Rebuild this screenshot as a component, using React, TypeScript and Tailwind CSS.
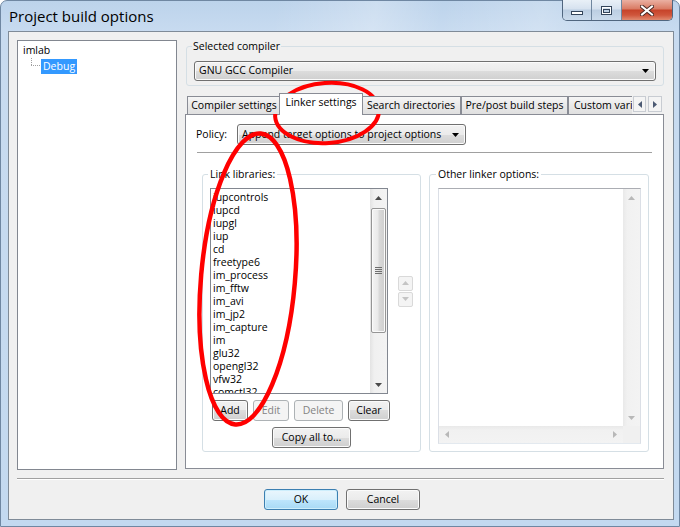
import React from "react";

type Dir = "up" | "down" | "left" | "right";
function Tri({ dir, color }: { dir: Dir; color: string }) {
  const v = dir === "up" || dir === "down";
  const pts = { up: "0,4 7,4 3.5,0", down: "0,0 7,0 3.5,4", left: "4,0 4,7 0,3.5", right: "0,0 0,7 4,3.5" }[dir];
  return (
    <svg width={v ? 7 : 4} height={v ? 4 : 7} className="block">
      <polygon points={pts} fill={color} />
    </svg>
  );
}

const BTN =
  "h-[21px] rounded-[3px] border border-[#707070] bg-[linear-gradient(to_bottom,#f2f2f2_0%,#ebebeb_50%,#dddddd_50%,#cfcfcf_100%)] shadow-[inset_0_0_0_1px_#fbfbfb] flex items-center justify-center text-black";
const BTN_DIS =
  "h-[21px] rounded-[3px] border border-[#adb2b5] bg-[#f4f4f4] flex items-center justify-center text-[#838383]";
const TAB =
  "h-[18px] mb-[1px] shrink-0 border border-b-0 border-[#898c95] bg-[linear-gradient(to_bottom,#f6f6f6,#e9e9e9_50%,#e0e0e0)] flex items-center justify-center whitespace-nowrap";

function Combo({ text, cls }: { text: string; cls: string }) {
  return (
    <div className={`${BTN} justify-between! pl-[4px] pr-[6px] ${cls}`}>
      <span className="whitespace-nowrap">{text}</span>
      <Tri dir="down" color="#000" />
    </div>
  );
}

const libs = [
  "iupcontrols",
  "iupcd",
  "iupgl",
  "iup",
  "cd",
  "freetype6",
  "im_process",
  "im_fftw",
  "im_avi",
  "im_jp2",
  "im_capture",
  "im",
  "glu32",
  "opengl32",
  "vfw32",
  "comctl32",
];

function ListScroll() {
  return (
    <div className="w-[17px] h-full flex flex-col bg-[linear-gradient(to_right,#e3e3e3,#f0f0f0_25%,#f3f3f3)]">
      <div className="h-[17px] flex items-center justify-center">
        <Tri dir="up" color="#4a4a4a" />
      </div>
      <div className="h-[2px]" />
      <div className="h-[125px] mx-[1px] rounded-[2px] border border-[#959595] bg-[linear-gradient(to_right,#f4f4f4,#e9e9e9_45%,#d9d9d9_55%,#cecece)] shadow-[inset_0_0_0_1px_#fafafa] flex flex-col items-center justify-center gap-[1px]">
        <div className="w-[7px] h-px bg-[#6e6e6e]" />
        <div className="w-[7px] h-px bg-[#6e6e6e]" />
        <div className="w-[7px] h-px bg-[#6e6e6e]" />
        <div className="w-[7px] h-px bg-[#6e6e6e]" />
      </div>
      <div className="flex-1" />
      <div className="h-[17px] flex items-center justify-center">
        <Tri dir="down" color="#4a4a4a" />
      </div>
    </div>
  );
}

export default function App() {
  return (
    <div className="relative w-[680px] h-[527px] overflow-hidden font-['Open_Sans',sans-serif] text-[10.5px] text-black">
      <div className="flex flex-col w-full h-full rounded-t-[7px] border border-[#6f87a2] bg-[linear-gradient(to_bottom,#bcd3eb_0px,#c8dbf0_31px,#c3d9f0_100%)] pl-[7px] pr-[5px] pb-[6px]">
        {/* title bar */}
        <div className="h-[30px] flex justify-between items-start shrink-0 bg-[linear-gradient(100deg,transparent_40%,rgba(255,255,255,0.25)_55%,transparent_65%,rgba(255,255,255,0.2)_80%,transparent_90%)]">
          <div className="ml-[1px] pt-[5px] text-[15px] leading-[20px] text-black">Project build options</div>
          <div className="-mt-[1px] mr-[1px] flex h-[21px] rounded-b-[5px] border border-t-0 border-[#50667f] overflow-hidden">
            <div className="w-[29px] h-full border-r border-[#6f869f] bg-[linear-gradient(to_bottom,#e9f0f7,#d6e2ef_45%,#bccee2_50%,#cbdbec)] flex items-end justify-center pb-[5px]">
              <svg width="12" height="4" className="block">
                <rect x="0.5" y="0.5" width="11" height="3" fill="#fff" stroke="#34455a" />
              </svg>
            </div>
            <div className="w-[30px] h-full border-r border-[#6f869f] bg-[linear-gradient(to_bottom,#e9f0f7,#d6e2ef_45%,#bccee2_50%,#cbdbec)] flex items-center justify-center pt-[1px]">
              <svg width="11" height="9" className="block">
                <rect x="0.5" y="0.5" width="10" height="8" fill="none" stroke="#34455a" />
                <rect x="1.5" y="1.5" width="8" height="6" fill="none" stroke="#fff" />
                <rect x="2.5" y="3.5" width="6" height="3" fill="none" stroke="#34455a" />
              </svg>
            </div>
            <div className="w-[50px] h-full bg-[linear-gradient(to_bottom,#eab0a2,#d97a63_45%,#c6432a_50%,#cf553b_75%,#e08a70)] flex items-center justify-center pt-[1px]">
              <svg width="14" height="11" className="block">
                <path d="M2 1.5 L12 9.5 M12 1.5 L2 9.5" stroke="#4a2a26" strokeWidth="4" strokeLinecap="square" />
                <path d="M2 1.5 L12 9.5 M12 1.5 L2 9.5" stroke="#fff" strokeWidth="2" strokeLinecap="square" />
              </svg>
            </div>
          </div>
        </div>

        {/* body */}
        <div className="flex-1 border border-[#7f8b98] bg-[#f0f0f0] flex flex-col pt-[8px] pl-[8px] pr-[9px]">
          <div className="flex h-[430px] gap-[8px]">
            {/* tree */}
            <div className="w-[160px] h-full border border-[#828790] bg-white pl-[5px] pt-[1px]">
              <div className="h-[16px] leading-[16px]">imlab</div>
              <div className="flex h-[16px]">
                <svg width="18" height="16" className="block shrink-0">
                  <line x1="8.5" y1="0" x2="8.5" y2="7" stroke="#a0a0a0" strokeDasharray="1 1" />
                  <line x1="8" y1="7.5" x2="18" y2="7.5" stroke="#a0a0a0" strokeDasharray="1 1" />
                </svg>
                <div className="mt-[1px] h-[15px] leading-[15px] px-[2px] bg-[#3399ff] text-white">Debug</div>
              </div>
            </div>

            {/* right column */}
            <div className="w-[479px] flex flex-col">
              <fieldset className="ml-[1px] w-[478px] border border-[#d5dfe5] rounded-[3px] pl-[7px] pb-[4px]">
                <legend className="-ml-[2px] px-[1px] leading-[13px]">Selected compiler</legend>
                <Combo text="GNU GCC Compiler" cls="mt-[8px] w-[462px] h-[20px]!" />
              </fieldset>

              {/* tab strip */}
              <div className="relative z-10 mt-[7px] h-[22px] flex items-end shrink-0">
                <div className="flex-1 h-full flex items-end overflow-hidden pl-[2px]">
                  <div className={`${TAB} w-[94px]`}>Compiler settings</div>
                  <div className="relative z-10 -mx-[2px] h-[22px] w-[84px] shrink-0 border border-b-0 border-[#898c95] bg-white flex items-center justify-center pb-[3px] whitespace-nowrap">
                    Linker settings
                  </div>
                  <div className={`${TAB} w-[100px]`}>Search directories</div>
                  <div className={`${TAB} w-[107px]`}>Pre/post build steps</div>
                  <div className={`${TAB} w-[90px] justify-start! pl-[5px]`}>Custom variables</div>
                </div>
                <div className="w-[32px] h-[16px] mb-[3px] flex gap-[2px] pl-[1px]">
                  <div className="w-[13px] h-full border border-[#c8ccd2] bg-[#f4f4f4] flex items-center justify-center">
                    <Tri dir="left" color="#4c5a73" />
                  </div>
                  <div className="w-[14px] h-full border border-[#c8ccd2] bg-[#f4f4f4] flex items-center justify-center">
                    <Tri dir="right" color="#4c5a73" />
                  </div>
                </div>
              </div>

              {/* tab panel */}
              <div className="-mt-[1px] h-[355px] border border-[#898c95] bg-white flex flex-col">
                <div className="mt-[9px] ml-[10px] flex items-center">
                  <div className="w-[41px]">Policy:</div>
                  <Combo text="Append target options to project options" cls="w-[229px]" />
                </div>
                <div className="mt-[7px] mx-[11px] h-px bg-[#a0a0a0]" />
                <div className="mt-[14px] pl-[16px] flex gap-[8px]">
                  <fieldset className="w-[219px] h-[285px] border border-[#d5dfe5] rounded-[3px] pl-[7px]">
                    <legend className="-ml-[2px] px-[2px] leading-[14px]">Link libraries:</legend>
                    <div className="mt-[7px] flex items-center gap-[10px]">
                      <div className="w-[178px] h-[206px] border border-[#828790] bg-white flex">
                        <div className="flex-1 overflow-hidden pl-[2px] pt-[2px]">
                          {libs.map((l) => (
                            <div key={l} className="h-[13px] leading-[13px] whitespace-nowrap">
                              {l}
                            </div>
                          ))}
                        </div>
                        <ListScroll />
                      </div>
                      <div className="w-[15px] flex flex-col gap-[1px]">
                        <div className="h-[15px] rounded-[2px] border border-[#d9d9d9] bg-[#f4f4f4] flex items-center justify-center">
                          <Tri dir="up" color="#c4c4c4" />
                        </div>
                        <div className="h-[15px] rounded-[2px] border border-[#d9d9d9] bg-[#f4f4f4] flex items-center justify-center">
                          <Tri dir="down" color="#c4c4c4" />
                        </div>
                      </div>
                    </div>
                    <div className="mt-[6px] ml-[2px] flex gap-[5px]">
                      <div className={`${BTN} w-[36px]`}>Add</div>
                      <div className={`${BTN_DIS} w-[36px]`}>Edit</div>
                      <div className={`${BTN_DIS} w-[49px]`}>Delete</div>
                      <div className={`${BTN} w-[42px]`}>Clear</div>
                    </div>
                    <div className={`${BTN} mt-[6px] ml-[62px] w-[79px]`}>Copy all to...</div>
                  </fieldset>

                  <fieldset className="w-[220px] h-[285px] border border-[#d5dfe5] rounded-[3px] pl-[8px]">
                    <legend className="-ml-[2px] px-[2px] leading-[14px]">Other linker options:</legend>
                    <div className="mt-[7px] w-[203px] h-[256px] border border-[#dbdfe6] border-t-[#abadb3] border-b-[#e3e9ef] bg-white flex flex-col">
                      <div className="flex-1 flex">
                        <div className="flex-1" />
                        <div className="w-[17px] flex flex-col bg-[linear-gradient(to_right,#e9e9e9,#f1f1f1_25%,#f3f3f3)]">
                          <div className="h-[17px] flex items-center justify-center">
                            <Tri dir="up" color="#b8b8b8" />
                          </div>
                          <div className="flex-1" />
                          <div className="h-[17px] flex items-center justify-center">
                            <Tri dir="down" color="#b8b8b8" />
                          </div>
                        </div>
                      </div>
                      <div className="h-[17px] flex">
                        <div className="flex-1 flex justify-between items-center px-[6px] bg-[linear-gradient(to_bottom,#e9e9e9,#f1f1f1_25%,#f3f3f3)]">
                          <Tri dir="left" color="#b8b8b8" />
                          <Tri dir="right" color="#b8b8b8" />
                        </div>
                        <div className="w-[17px] bg-[#f0f0f0]" />
                      </div>
                    </div>
                  </fieldset>
                </div>
              </div>
            </div>
          </div>

          {/* separator */}
          <div className="mt-[8px] h-[2px] border-t border-b border-t-[#a0a0a0] border-b-white" />

          {/* OK / Cancel */}
          <div className="mt-[9px] ml-[247px] flex gap-[8px]">
            <div className="h-[21px] w-[74px] rounded-[3px] border border-[#3c7fb1] bg-[linear-gradient(to_bottom,#eaf6fd_0%,#d9f0fc_50%,#bee6fd_50%,#a7d9f5_100%)] shadow-[inset_0_0_0_1px_#cdeefc] flex items-center justify-center">
              OK
            </div>
            <div className={`${BTN} w-[74px]`}>Cancel</div>
          </div>
        </div>
      </div>

      {/* red annotation ellipses */}
      <svg className="absolute inset-0 pointer-events-none" width="680" height="527">
        <ellipse cx="327" cy="113" rx="52" ry="30" transform="rotate(-4 327 113)" fill="none" stroke="#ff0000" strokeWidth="4" />
        <ellipse cx="248" cy="279" rx="47" ry="146" transform="rotate(5 248 279)" fill="none" stroke="#ff0000" strokeWidth="4.5" />
      </svg>
    </div>
  );
}
